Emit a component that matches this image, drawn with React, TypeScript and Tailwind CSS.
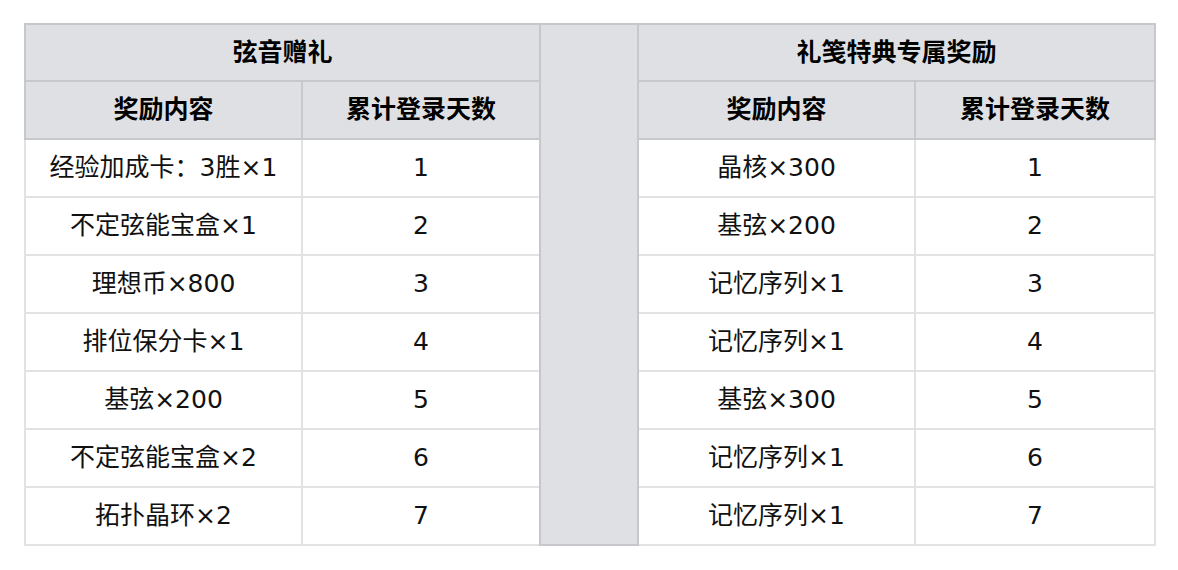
import React from 'react';

const left = [
  ['经验加成卡：3胜×1', '1'],
  ['不定弦能宝盒×1', '2'],
  ['理想币×800', '3'],
  ['排位保分卡×1', '4'],
  ['基弦×200', '5'],
  ['不定弦能宝盒×2', '6'],
  ['拓扑晶环×2', '7'],
];

const right = [
  ['晶核×300', '1'],
  ['基弦×200', '2'],
  ['记忆序列×1', '3'],
  ['记忆序列×1', '4'],
  ['基弦×300', '5'],
  ['记忆序列×1', '6'],
  ['记忆序列×1', '7'],
];

const head = 'border-2 border-[#c7c8cc] bg-[#dfe0e4] font-bold text-center text-black';
const cell = 'border-2 border-[#e2e2e2] text-center h-[58px]';

export default function App() {
  return (
    <div
      className="w-[1178px] h-[570px] bg-white pt-[23px] pl-[24px] text-[#111] text-[25px]"
      style={{ fontFamily: '"DejaVu Sans", "Noto Sans CJK SC", sans-serif' }}
    >
      <table className="table-fixed border-collapse w-[1130px]">
        <colgroup>
          <col className="w-[277px]" />
          <col className="w-[238px]" />
          <col className="w-[98px]" />
          <col className="w-[277px]" />
          <col className="w-[240px]" />
        </colgroup>
        <tbody>
          <tr>
            <td colSpan={2} className={head + ' h-[57px]'}>弦音赠礼</td>
            <td rowSpan={9} className={head}></td>
            <td colSpan={2} className={head + ' h-[57px]'}>礼笺特典专属奖励</td>
          </tr>
          <tr>
            <td className={head + ' h-[58px]'}>奖励内容</td>
            <td className={head + ' h-[58px]'}>累计登录天数</td>
            <td className={head + ' h-[58px]'}>奖励内容</td>
            <td className={head + ' h-[58px]'}>累计登录天数</td>
          </tr>
          {left.map((l, i) => (
            <tr key={i}>
              <td className={cell}>{l[0]}</td>
              <td className={cell}>{l[1]}</td>
              <td className={cell}>{right[i][0]}</td>
              <td className={cell}>{right[i][1]}</td>
            </tr>
          ))}
        </tbody>
      </table>
    </div>
  );
}
